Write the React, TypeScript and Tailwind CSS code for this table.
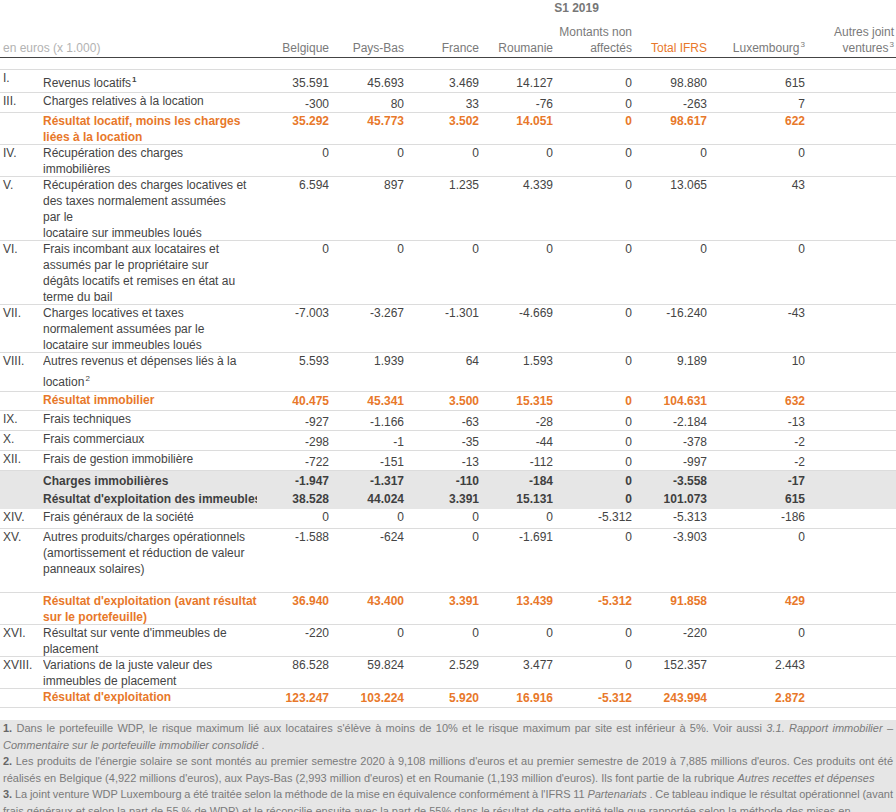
import React from 'react'

type Kind = 'normal' | 'orange' | 'gray'

type Row = {
  n?: string
  lines: React.ReactNode[]
  vals: string[]
  h: string
  lp?: string
  np?: string
  kind?: Kind
  border?: boolean
  l2?: string
}

const cols = 'grid grid-cols-[43px_214px_74px_75px_75px_74px_79px_75px_98px_89px]'

const Sup = ({ children, bold }: { children: React.ReactNode; bold?: boolean }) => (
  <span className={`relative -top-[5px] text-[8px] leading-none ml-[1px] ${bold ? 'font-bold' : ''}`}>{children}</span>
)

const rows: Row[] = [
  { n: 'I.', lines: [<>Revenus locatifs<Sup bold>1</Sup></>], vals: ['35.591', '45.693', '3.469', '14.127', '0', '98.880', '615'], h: 'h-[23px]', lp: 'pt-[5px]', np: 'pt-[5px]' },
  { n: 'III.', lines: ['Charges relatives à la location'], vals: ['-300', '80', '33', '-76', '0', '-263', '7'], h: 'h-[20px]', np: 'pt-[3px]' },
  { lines: ['Résultat locatif, moins les charges', 'liées à la location'], vals: ['35.292', '45.773', '3.502', '14.051', '0', '98.617', '622'], h: 'h-[32px]', kind: 'orange' },
  { n: 'IV.', lines: ['Récupération des charges', 'immobilières'], vals: ['0', '0', '0', '0', '0', '0', '0'], h: 'h-[32px]' },
  { n: 'V.', lines: ['Récupération des charges locatives et', 'des taxes normalement assumées', 'par le', 'locataire sur immeubles loués'], vals: ['6.594', '897', '1.235', '4.339', '0', '13.065', '43'], h: 'h-[64px]' },
  { n: 'VI.', lines: ['Frais incombant aux locataires et', 'assumés par le propriétaire sur', 'dégâts locatifs et remises en état au', 'terme du bail'], vals: ['0', '0', '0', '0', '0', '0', '0'], h: 'h-[64px]' },
  { n: 'VII.', lines: ['Charges locatives et taxes', 'normalement assumées par le', 'locataire sur immeubles loués'], vals: ['-7.003', '-3.267', '-1.301', '-4.669', '0', '-16.240', '-43'], h: 'h-[48px]' },
  { n: 'VIII.', lines: ['Autres revenus et dépenses liés à la', <>location<Sup>2</Sup></>], vals: ['5.593', '1.939', '64', '1.593', '0', '9.189', '10'], h: 'h-[39px]', l2: 'pt-[5px]' },
  { lines: ['Résultat immobilier'], vals: ['40.475', '45.341', '3.500', '15.315', '0', '104.631', '632'], h: 'h-[19px]', np: 'pt-[1px]', kind: 'orange' },
  { n: 'IX.', lines: ['Frais techniques'], vals: ['-927', '-1.166', '-63', '-28', '0', '-2.184', '-13'], h: 'h-[20px]', np: 'pt-[3px]' },
  { n: 'X.', lines: ['Frais commerciaux'], vals: ['-298', '-1', '-35', '-44', '0', '-378', '-2'], h: 'h-[20px]', np: 'pt-[3px]' },
  { n: 'XII.', lines: ['Frais de gestion immobilière'], vals: ['-722', '-151', '-13', '-112', '0', '-997', '-2'], h: 'h-[20px]', np: 'pt-[3px]' },
  { lines: ['Charges immobilières'], vals: ['-1.947', '-1.317', '-110', '-184', '0', '-3.558', '-17'], h: 'h-[20px]', lp: 'pt-[2px]', np: 'pt-[2px]', kind: 'gray', border: false },
  { lines: ["Résultat d'exploitation des immeubles"], vals: ['38.528', '44.024', '3.391', '15.131', '0', '101.073', '615'], h: 'h-[18px]', kind: 'gray', border: false },
  { n: 'XIV.', lines: ['Frais généraux de la société'], vals: ['0', '0', '0', '0', '-5.312', '-5.313', '-186'], h: 'h-[20px]' },
  { n: 'XV.', lines: ['Autres produits/charges opérationnels', '(amortissement et réduction de valeur', 'panneaux solaires)'], vals: ['-1.588', '-624', '0', '-1.691', '0', '-3.903', '0'], h: 'h-[64px]' },
  { lines: ["Résultat d'exploitation (avant résultat", 'sur le portefeuille)'], vals: ['36.940', '43.400', '3.391', '13.439', '-5.312', '91.858', '429'], h: 'h-[32px]', kind: 'orange' },
  { n: 'XVI.', lines: ["Résultat sur vente d'immeubles de", 'placement'], vals: ['-220', '0', '0', '0', '0', '-220', '0'], h: 'h-[32px]' },
  { n: 'XVIII.', lines: ['Variations de la juste valeur des', 'immeubles de placement'], vals: ['86.528', '59.824', '2.529', '3.477', '0', '152.357', '2.443'], h: 'h-[32px]' },
  { lines: ["Résultat d'exploitation"], vals: ['123.247', '103.224', '5.920', '16.916', '-5.312', '243.994', '2.872'], h: 'h-[19px]', np: 'pt-[1px]', kind: 'orange' },
]

const TableRow = ({ row }: { row: Row }) => {
  const kind = row.kind ?? 'normal'
  const tone =
    kind === 'orange'
      ? 'text-[#e8782a] font-bold'
      : kind === 'gray'
        ? 'text-[#3f3f3f] font-bold bg-[#e6e6e6]'
        : 'text-[#444]'
  const border = row.border === false ? '' : 'border-b border-[#dcdcdc]'
  return (
    <div className={`${cols} ${row.h} ${border} ${tone} leading-4`}>
      <div className="pl-[3px] font-normal text-[#444]">{row.n}</div>
      <div className={`overflow-hidden whitespace-nowrap ${row.lp ?? ''}`}>
        {row.lines.map((l, i) => (
          <div key={i} className={i === 1 && row.l2 ? row.l2 : ''}>
            {l}
          </div>
        ))}
      </div>
      {row.vals.map((v, i) => (
        <div key={i} className={`text-right pr-[2px] ${row.np ?? row.lp ?? ''}`}>
          {v}
        </div>
      ))}
      <div />
    </div>
  )
}

const App = () => {
  return (
    <div className="w-[896px] h-[812px] overflow-hidden bg-white font-['Liberation_Sans',Arial,sans-serif] text-[12px]">
      {/* header */}
      <div className="h-[58px] border-b border-[#444] text-[#7a7a7a] leading-4">
        <div className={`${cols} h-[24px]`}>
          <div className="col-span-2" />
          <div className="col-span-8 text-center font-bold text-[#777]">S1 2019</div>
        </div>
        <div className={cols}>
          <div className="col-span-2 pl-[3px] pt-4 text-[#b3b3b3]">en euros (x 1.000)</div>
          <div className="text-right pr-[2px] pt-4">Belgique</div>
          <div className="text-right pr-[2px] pt-4">Pays-Bas</div>
          <div className="text-right pr-[2px] pt-4">France</div>
          <div className="text-right pr-[2px] pt-4">Roumanie</div>
          <div className="text-right pr-[2px]">
            Montants non
            <br />
            affectés
          </div>
          <div className="text-right pr-[2px] pt-4 text-[#e8782a]">Total IFRS</div>
          <div className="text-right pr-[2px] pt-4">
            Luxembourg<Sup>3</Sup>
          </div>
          <div className="text-right pr-[2px] whitespace-nowrap">
            Autres joint
            <br />
            ventures<Sup>3</Sup>
          </div>
        </div>
      </div>
      <div className="h-[12px] border-b border-[#dcdcdc]" />
      {rows.map((r, i) => (
        <TableRow key={i} row={r} />
      ))}

      {/* notes */}
      <div className="mt-[12px] bg-[#e6e6e6] px-[3px] text-[11px] leading-[16.5px] text-[#7a7a7a] h-[200px]">
        <div className="text-justify [text-align-last:justify]">
          <b className="text-[#666]">1.</b> Dans le portefeuille WDP, le risque maximum lié aux locataires s'élève à moins de 10% et le risque maximum par site est inférieur à 5%. Voir aussi <i>3.1. Rapport immobilier –</i>
        </div>
        <div>
          <i>Commentaire sur le portefeuille immobilier consolidé</i> .
        </div>
        <div className="text-justify [text-align-last:justify]">
          <b className="text-[#666]">2.</b> Les produits de l'énergie solaire se sont montés au premier semestre 2020 à 9,108 millions d'euros et au premier semestre de 2019 à 7,885 millions d'euros. Ces produits ont été
        </div>
        <div>
          réalisés en Belgique (4,922 millions d'euros), aux Pays-Bas (2,993 million d'euros) et en Roumanie (1,193 million d'euros). Ils font partie de la rubrique <i>Autres recettes et dépenses</i>
        </div>
        <div className="text-justify [text-align-last:justify] [word-spacing:-1.5px]">
          <b className="text-[#666]">3.</b> La joint venture WDP Luxembourg a été traitée selon la méthode de la mise en équivalence conformément à l'IFRS 11 <i>Partenariats</i> . Ce tableau indique le résultat opérationnel (avant
        </div>
        <div>frais généraux et selon la part de 55 % de WDP) et le réconcilie ensuite avec la part de 55% dans le résultat de cette entité telle que rapportée selon la méthode des mises en</div>
        <div>équivalence.</div>
      </div>
    </div>
  )
}

export default App
